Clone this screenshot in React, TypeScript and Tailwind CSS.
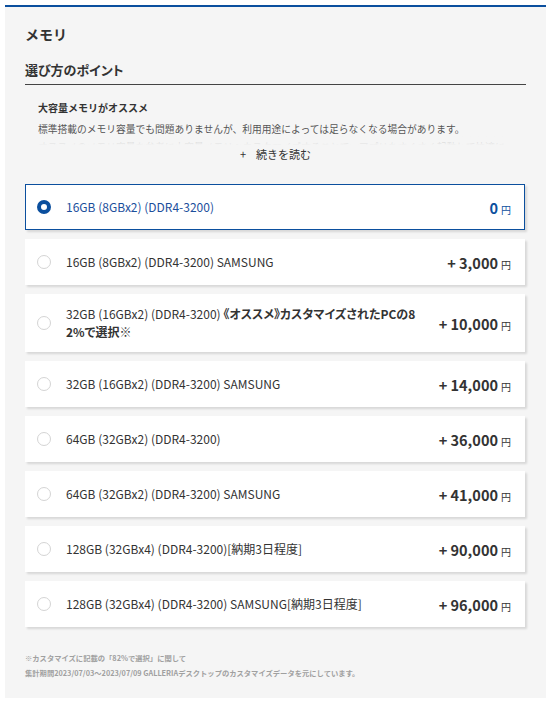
import React, { useState } from "react";

interface MemoryOption {
  id: string;
  label: React.ReactNode;
  price: number;
  tall?: boolean;
}

const options: MemoryOption[] = [
  { id: "m1", label: "16GB (8GBx2) (DDR4-3200)", price: 0 },
  { id: "m2", label: "16GB (8GBx2) (DDR4-3200) SAMSUNG", price: 3000 },
  {
    id: "m3",
    label: (
      <>
        32GB (16GBx2) (DDR4-3200) <span className="font-bold">《オススメ》カスタマイズされたPCの82%で選択※</span>
      </>
    ),
    price: 10000,
    tall: true,
  },
  { id: "m4", label: "32GB (16GBx2) (DDR4-3200) SAMSUNG", price: 14000 },
  { id: "m5", label: "64GB (32GBx2) (DDR4-3200)", price: 36000 },
  { id: "m6", label: "64GB (32GBx2) (DDR4-3200) SAMSUNG", price: 41000 },
  { id: "m7", label: "128GB (32GBx4) (DDR4-3200)[納期3日程度]", price: 90000 },
  { id: "m8", label: "128GB (32GBx4) (DDR4-3200) SAMSUNG[納期3日程度]", price: 96000 },
];

const font = "font-['Noto_Sans_CJK_JP','Noto_Sans',sans-serif]";

function OptionCard({ option, selected, onSelect }: { option: MemoryOption; selected: boolean; onSelect: () => void }) {
  return (
    <button
      type="button"
      onClick={onSelect}
      className={`flex w-full items-center border bg-white pl-[11px] pr-[13px] text-left shadow-[2px_2px_2px_rgba(0,0,0,0.12)] ${
        selected ? "border-[#0b4f9e]" : "border-white"
      } ${option.tall ? "h-[58px]" : "h-[46px]"}`}
    >
      <span
        className={`h-[14px] w-[14px] shrink-0 rounded-full bg-white ${
          selected ? "border-[4.5px] border-[#0b4f9e]" : "border border-[#d4d4d4]"
        }`}
      />
      <span
        className={`ml-[15px] flex-1 break-all text-[12px] leading-[18px] [font-feature-settings:'palt'] ${
          selected ? "text-[#1c4f9c]" : "text-[#333]"
        }`}
      >
        {option.label}
      </span>
      <span className={`ml-[10px] shrink-0 whitespace-nowrap font-bold ${selected ? "text-[#0b4f9e]" : "text-[#333]"}`}>
        <span className="text-[14.5px]">{option.price === 0 ? "0" : `+ ${option.price.toLocaleString("en-US")}`}</span>
        <span className="ml-[3px] text-[10px] font-normal">円</span>
      </span>
    </button>
  );
}

export default function App() {
  const [selectedId, setSelectedId] = useState("m1");

  return (
    <div className={`bg-white p-[5px] ${font}`}>
      <div className="border-t-2 border-[#0b4f9e] bg-[#f5f5f5] px-5 pb-[17px] pt-[17px]">
        <h2 className="text-[14px] font-bold leading-[20px] text-[#333]">メモリ</h2>

        <h3 className="mt-[16px] border-b border-[#444] pb-[4px] text-[13px] font-bold leading-[20px] text-[#333] [font-feature-settings:'palt']">
          選び方のポイント
        </h3>

        <div className="px-[13px] pt-[14px]">
          <p className="text-[10px] font-bold leading-[18px] text-[#333]">大容量メモリがオススメ</p>
          <div className="relative mt-[3px] h-[25px] overflow-hidden">
            <p className="text-[9.75px] leading-[18px] text-[#555]">
              標準搭載のメモリ容量でも問題ありませんが、利用用途によっては足らなくなる場合があります。
              <br />
              オススメのメモリ容量を参考に大容量メモリへカスタマイズすることで、アプリをさくさく起動して快適に作業できます。
            </p>
            <div className="absolute inset-x-0 bottom-0 h-[10px] bg-gradient-to-b from-[#f5f5f5]/40 to-[#f5f5f5]" />
          </div>
        </div>

        <button type="button" className="mx-auto flex items-center gap-[10px] text-[11px] leading-[18px] text-[#333]">
          <span>+</span>
          <span>続きを読む</span>
        </button>

        <div className="mt-[21px] flex flex-col gap-[9px] pr-[1px]">
          {options.map((option) => (
            <OptionCard
              key={option.id}
              option={option}
              selected={option.id === selectedId}
              onSelect={() => setSelectedId(option.id)}
            />
          ))}
        </div>

        <div className="mt-[24px] text-[7.3px] font-bold leading-[15px] text-[#a0a0a0]">
          <p>※カスタマイズに記載の「82%で選択」に関して</p>
          <p>集計期間2023/07/03〜2023/07/09 GALLERIAデスクトップのカスタマイズデータを元にしています。</p>
        </div>
      </div>
    </div>
  );
}
